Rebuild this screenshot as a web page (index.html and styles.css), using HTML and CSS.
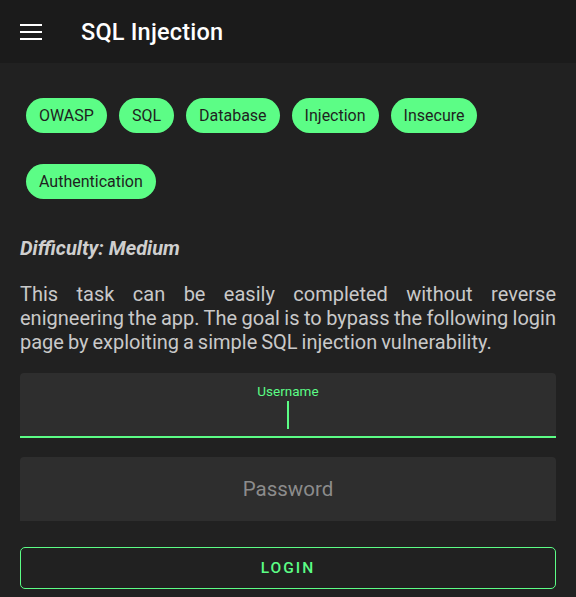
FILE: index.html
```html
<!DOCTYPE html>
<html>
<head>
<meta charset="utf-8">
<link rel="stylesheet" href="styles.css">
</head>
<body>
<header class="appbar">
  <svg class="menu" width="22" height="16" viewBox="0 0 22 16"><path d="M0 0h22v2H0zM0 7h22v2H0zM0 14h22v2H0z" fill="#fff"/></svg>
  <h1 class="title">SQL Injection</h1>
</header>
<main class="content">
  <div class="chips">
    <span class="chip">OWASP</span>
    <span class="chip">SQL</span>
    <span class="chip">Database</span>
    <span class="chip">Injection</span>
    <span class="chip">Insecure</span>
    <span class="chip">Authentication</span>
  </div>
  <p class="difficulty">Difficulty: Medium</p>
  <p class="desc">This task can be easily completed without reverse enigneering the app. The goal is to bypass the following login page by exploiting a simple SQL injection vulnerability.</p>
  <div class="field focused">
    <span class="label">Username</span>
    <span class="cursor"></span>
  </div>
  <div class="field">
    <span class="placeholder">Password</span>
  </div>
  <button class="login">LOGIN</button>
</main>
</body>
</html>
```
FILE: styles.css
```css
* { box-sizing: border-box; }
html, body { margin: 0; padding: 0; }
body {
  background: #212121;
  font-family: Roboto, "Noto Sans", sans-serif;
  width: 576px;
  height: 597px;
  overflow: hidden;
}
.appbar {
  height: 63px;
  background: #1b1b1b;
  display: flex;
  align-items: center;
  padding-left: 20px;
}
.menu { display: block; margin-right: 39px; margin-top: 1px; }
.title {
  margin: 0;
  color: #fff;
  font-size: 23.5px;
  font-weight: 500;
  letter-spacing: 0.2px;
}
.content { padding: 35px 20px 0; }
.chips {
  display: flex;
  flex-wrap: wrap;
  column-gap: 12px;
  row-gap: 31px;
  padding-left: 6px;
}
.chip {
  height: 35px;
  display: flex;
  align-items: center;
  padding: 0 13px;
  background: #5cfd86;
  color: #1f1f1f;
  font-size: 16px;
  border-radius: 18px;
}
.difficulty {
  margin: 37px 0 0;
  color: #cfcfcf;
  font-weight: 700;
  font-style: italic;
  font-size: 20px;
  line-height: 24px;
}
.desc {
  margin: 22px 0 0;
  color: #c9c9c9;
  font-size: 20px;
  line-height: 24px;
  word-spacing: -1px;
  text-align: justify;
}
.field {
  margin-top: 19px;
  height: 64px;
  background: #2e2e2e;
  border-radius: 4px 4px 0 0;
  display: flex;
  flex-direction: column;
  align-items: center;
  justify-content: center;
}
.field.focused {
  height: 65px;
  border-bottom: 2px solid #5cfd86;
  justify-content: flex-start;
  padding-top: 11px;
}
.field + .field { margin-top: 19px; }
.label {
  color: #5cfd86;
  font-size: 13.5px;
  line-height: 15px;
}
.cursor {
  display: block;
  width: 2px;
  height: 28px;
  margin-top: 2px;
  background: #5cfd86;
}
.placeholder {
  color: #8c8c8c;
  font-size: 20.5px;
}
.login {
  display: block;
  width: 100%;
  margin-top: 26px;
  height: 42px;
  background: transparent;
  border: 1px solid #5cfd86;
  border-radius: 5px;
  color: #5cfd86;
  font-family: Roboto, sans-serif;
  font-weight: 500;
  font-size: 15.5px;
  letter-spacing: 2px;
}
```
